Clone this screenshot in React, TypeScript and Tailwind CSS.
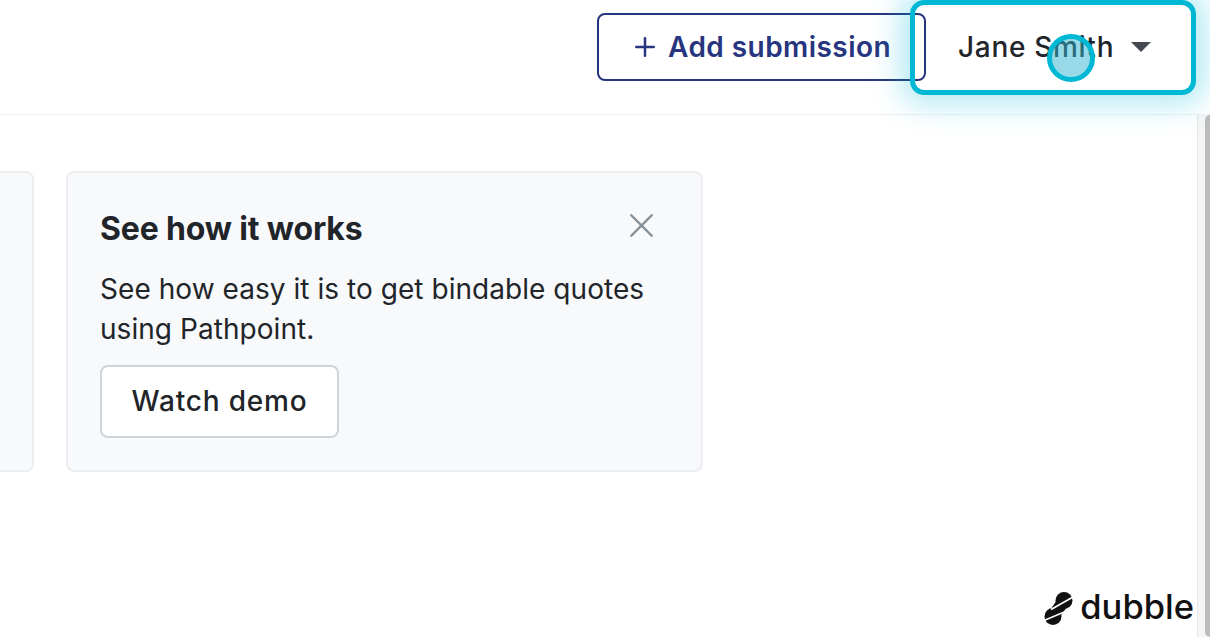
import { Plus, X } from "lucide-react";

function Logo() {
  return (
    <div className="absolute right-[16px] bottom-[10px] flex items-center">
      <svg width="40" height="40" viewBox="3 -3 40 40">
        <circle cx="24" cy="10.500" r="8.500" fill="#111" />
        <circle cx="13" cy="26.500" r="8.500" fill="#111" />
        <path d="M23 12 14 25" stroke="#111" strokeWidth="12" />
        <path d="M11 19.500 33 7" stroke="#fff" strokeWidth="1.600" />
        <path d="M4 30.500 29 20" stroke="#fff" strokeWidth="1.600" />
      </svg>
      <span className="-ml-[3px] text-[34.500px] leading-[40px] font-medium text-[#111]">dubble</span>
    </div>
  );
}

export default function App() {
  return (
    <div className="relative h-[637px] w-[1210px] overflow-hidden bg-white font-['Inter',sans-serif]">
      <header className="flex h-[115px] items-start justify-end border-b border-[#f0f1f4] pt-[13px] pr-[17px]">
        <button className="flex h-[68px] w-[329px] items-center gap-[8px] rounded-[8px] border-2 border-[#27357e] pl-[31px] text-[28px] font-semibold tracking-[0.450px] text-[#27357e]">
          <Plus size={30} strokeWidth={2} />
          Add submission
        </button>
        <button className="flex h-[68px] w-[267px] items-center gap-[17px] pl-[32px] text-[28px] font-medium tracking-[0.700px] text-[#212529]">
          Jane Smith
          <span className="h-0 w-0 border-x-[10.500px] border-t-[10px] border-x-transparent border-t-[#454a50]" />
        </button>
      </header>

      <div className="flex h-[522px] justify-between">
        <main className="flex gap-[32px] pt-[56px]">
          <div className="-ml-[20px] h-[301px] w-[54px] rounded-[8px] border-2 border-[#eceef2] bg-[#f8f9fb]" />
          <section className="h-[301px] w-[637px] rounded-[8px] border-2 border-[#eceef2] bg-[#f8f9fb] pt-[33px] pr-[32px] pl-[32px]">
            <div className="-mt-[1px] flex items-start justify-between">
              <h2 className="text-[32px] leading-[48px] font-bold tracking-[-0.150px] text-[#212529]">See how it works</h2>
              <X size={41} strokeWidth={1.400} className="-mt-[0.500px] mr-[7.500px] text-[#868e96]" />
            </div>
            <p className="mt-[16px] text-[28px] leading-[40px] tracking-[0.050px] text-[#212529]">
              See how easy it is to get bindable quotes using Pathpoint.
            </p>
            <button className="mt-[16px] h-[73px] w-[239px] rounded-[8px] border-2 border-[#ced4da] bg-white pb-[2px] text-[28px] font-medium tracking-[0.800px] text-[#212529]">
              Watch demo
            </button>
          </section>
        </main>
        <div className="relative w-[13px] overflow-hidden border-l border-[#e8e8e8] bg-[#f5f5f5]">
          <div className="absolute top-0 left-[7px] h-full w-[10px] rounded-[5px] bg-[#bdbdbd]" />
        </div>
      </div>

      {/* highlight on the user menu */}
      <div className="absolute top-0 left-[910px] h-[95px] w-[286px] rounded-[14px] border-[5px] border-[#00b8d4] shadow-[0_0_30px_10px_rgba(0,184,212,0.3)]" />
      <div className="absolute top-[34px] left-[1047px] h-[48px] w-[48px] rounded-full border-[5px] border-[#00b8d4] bg-[#2fb3cd]/50" />

      <Logo />
    </div>
  );
}
